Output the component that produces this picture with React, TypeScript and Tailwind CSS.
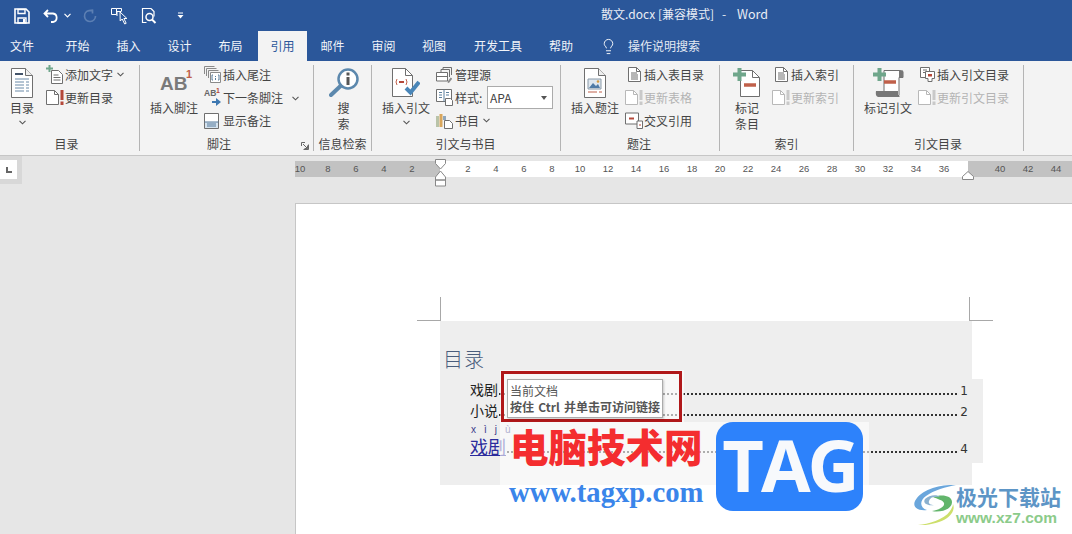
import React from "react";
import { Lightbulb } from "lucide-react";

const G = "#6f6f6f";
const L = "#b8b8b8";

function PageSvg({ w = 22, h = 30, disabled = false, children }: { w?: number; h?: number; disabled?: boolean; children?: React.ReactNode }) {
  return (
    <svg width={w} height={h} viewBox="0 0 22 30" fill="none">
      <path d="M.5.5h14l7 7v22H.5z" fill="#fff" stroke={disabled ? L : G} />
      <path d="M14.5.5v7h7" stroke={disabled ? L : G} fill="#eee" />
      {children}
    </svg>
  );
}

const Toc = () => (
  <PageSvg>
    <path d="M4 6h8" stroke="#44546a" strokeWidth="2" />
    <path d="M4 11h14M4 14h9M15 14h3M4 17h9M15 17h3M4 20h9M15 20h3M4 23h9M15 23h3" stroke="#6b8aa8" />
  </PageSvg>
);

const SmallPage = ({ dis = false, lines = false }: { dis?: boolean; lines?: boolean }) => (
  <svg width="13" height="15" viewBox="0 0 13 15" fill="none">
    <path d="M.5.5h8l4 4v10H.5z" fill="#fff" stroke={dis ? L : G} />
    <path d="M8.5.5v4h4" stroke={dis ? L : G} />
    {lines && <path d="M3 6h6M3 8h7M3 10h7M3 12h7" stroke={G} />}
  </svg>
);

const Bang = ({ dis = false }: { dis?: boolean }) => (
  <span className="flex items-center gap-[1px]">
    <SmallPage dis={dis} />
    <svg width="4" height="15" viewBox="0 0 4 15">
      <path d="M.5 0h3v10h-3zM.5 11.5h3V15h-3z" fill={dis ? "#c9c9c9" : "#b5493a"} />
    </svg>
  </span>
);

const AddText = () => (
  <svg width="18" height="19" viewBox="0 0 18 19" fill="none">
    <path d="M5.5 5.500h7l4 4v9h-11z" fill="#fff" stroke={G} />
    <path d="M7.500 10h5M7.500 12.500h7M7.500 15h7" stroke={G} />
    <path d="M2.500 0h2v2.500H7v2H4.500V7h-2V4.500H0v-2h2.500z" fill="#6fa68b" />
  </svg>
);

const Endnote = () => (
  <svg width="17" height="17" viewBox="0 0 17 17" fill="none">
    <path d="M.5 8V.5h10M2.500 10V2.500h10M4.500 12V4.500h10" stroke="#8a8a8a" />
    <path d="M6.500 6.500h10v10h-10z" fill="#fff" stroke="#8a8a8a" />
    <path d="M9 9H8v5h1M14 9h1v5h-1M11.500 10v1M11.500 12v2" stroke="#5b7f9d" />
  </svg>
);

const NextNote = () => (
  <span className="relative block w-[17px] h-[17px] font-['Liberation_Sans',sans-serif]">
    <span className="absolute left-0 top-0 text-[8.500px] leading-[9px] font-bold text-[#666]">AB</span>
    <span className="absolute left-[12px] top-[-2px] text-[7px] leading-[8px] font-bold text-[#b5493a]">1</span>
    <svg className="absolute left-[8px] top-[9px]" width="9" height="8" viewBox="0 0 9 8">
      <path d="M0 3h4V0l5 4-5 4V5H0z" fill="#3d78b1" />
    </svg>
  </span>
);

const ShowNotes = () => (
  <svg width="15" height="16" viewBox="0 0 15 16" fill="none">
    <path d="M.5.5h14v15H.5z" fill="#fff" stroke={G} />
    <path d="M1 9h13v6H1z" fill="#d5e3ef" />
    <path d="M.5 9h14M3 11h9M3 13h9" stroke="#54789a" />
  </svg>
);

const Search = () => (
  <svg width="30" height="30" viewBox="0 0 30 30" fill="none">
    <circle cx="19" cy="11" r="9.500" fill="#fff" stroke="#5c88ad" strokeWidth="2.500" />
    <path d="M11.500 18L2 27" stroke="#5c88ad" strokeWidth="4" strokeLinecap="round" />
    <path d="M17.500 9h3v8h-3zM17.500 4.500h3v3h-3z" fill="#555" />
  </svg>
);

const Citation = () => (
  <svg width="28" height="30" viewBox="0 0 28 30" fill="none">
    <path d="M.5.500h13l7 7v21H.5z" fill="#fff" stroke={G} />
    <path d="M13.500.5v7h7" stroke={G} />
    <path d="M5 11q-2 3 0 6M14 11q2 3 0 6" stroke="#c0604a" />
    <path d="M7 14h5" stroke="#b5493a" strokeWidth="2" />
    <path d="M14 20l4.500 4.500L27 14" stroke="#4a86b8" strokeWidth="4" />
  </svg>
);

const Manage = () => (
  <svg width="16" height="16" viewBox="0 0 16 16" fill="none">
    <path d="M7 3V.5h8.500V8M5 5V2.500h8.500V10" stroke={G} />
    <path d="M.5 5.500h11V14H.5z" fill="#fff" stroke={G} />
    <path d="M.5 9.500h11" stroke={G} />
    <path d="M12 15.500L15.500 11" stroke="#8a8a8a" strokeWidth="2" />
  </svg>
);

const StyleI = () => (
  <svg width="17" height="17" viewBox="0 0 17 17" fill="none">
    <path d="M.5.5h15v12H.5z" fill="#fff" stroke={G} />
    <path d="M8 .5v12M3 3.500h3M3 6h3M3 8.500h3M10 3.500h3M10 6h3" stroke="#5b7f9d" />
    <path d="M9.500 9.500h5l2 2v5h-7z" fill="#fff" stroke={G} />
  </svg>
);

const Biblio = () => (
  <svg width="17" height="17" viewBox="0 0 17 17" fill="none">
    <path d="M0 4h3v11H0z" fill="#b9c3a8" />
    <path d="M3.500 2h3v13h-3z" fill="#d9a75d" />
    <path d="M7 4h3v4H7z" fill="#8fa7bd" />
    <path d="M8.500 8.500h5l3 3v5h-8z" fill="#fff" stroke={G} />
  </svg>
);

const Caption = () => (
  <PageSvg>
    <path d="M4 11h13v10H4z" fill="#dfe7ee" stroke="#8a9aa8" />
    <path d="M5 20l4-5 3 3 2-2 2 4z" fill="#4f7ba6" />
    <circle cx="14" cy="13.500" r="1.300" fill="#d59b3f" />
    <path d="M4 24h9M15 24h3" stroke="#c0604a" />
  </PageSvg>
);

const CrossRef = () => (
  <svg width="18" height="17" viewBox="0 0 18 17" fill="none">
    <path d="M.5 1h13v11H.5z" fill="#fff" stroke={G} />
    <path d="M4 6.500h5" stroke="#b5493a" strokeWidth="2" />
    <path d="M12 9h5.500v7.500H12z" fill="#fff" stroke={G} />
    <path d="M14 13h2" stroke="#b5493a" />
  </svg>
);

const MarkEntry = () => (
  <svg width="28" height="29" viewBox="0 0 28 29" fill="none">
    <path d="M7.500 2.500h12l7 7v19h-19z" fill="#fff" stroke={G} />
    <path d="M19.500 2.500v7h7" stroke={G} />
    <path d="M11 17h12" stroke="#c0604a" strokeWidth="3.500" />
    <path d="M4.500 0h4v4.500H13v4H8.500V13h-4V8.500H0v-4h4.500z" fill="#6fa68b" />
  </svg>
);

const MarkCite = () => (
  <svg width="31" height="29" viewBox="0 0 31 29" fill="none">
    <path d="M11 2.500h16l3 1v6h-4v18H11z" fill="#fff" stroke={G} />
    <path d="M26 2.500h4v7h-4z" fill="#777" />
    <path d="M3 23h22v4l2 2H5q-3-1-2-6z" fill="#777" />
    <path d="M11 14h12" stroke="#c0604a" strokeWidth="3.500" />
    <path d="M4.500 0h4v4.500H13v4H8.500V13h-4V8.500H0v-4h4.500z" fill="#6fa68b" />
  </svg>
);

const Toa = () => (
  <svg width="15" height="15" viewBox="0 0 15 15" fill="none">
    <path d="M.5.5h9v10H.5z" fill="#fff" stroke={G} />
    <path d="M3 3h4M3 5.500h4" stroke={G} />
    <path d="M5.500 4.500h9v7h-2.500v3H8v-3H5.500z" fill="#fff" stroke={G} />
    <path d="M8 7h4v2.500H8z" fill="#b5493a" />
  </svg>
);

function Big({ w, ml = 0, icon, lines, chev = false, top = 5 }: { w: number; ml?: number; icon: React.ReactNode; lines: string[]; chev?: boolean; top?: number }) {
  return (
    <div className="flex flex-col items-center shrink-0" style={{ width: w, marginLeft: ml }}>
      <div className="h-[37px] flex items-start justify-center" style={{ paddingTop: top }}>{icon}</div>
      {lines.map((t) => (
        <div key={t} className="text-[12px] leading-[16px] text-[#444] whitespace-nowrap">{t}</div>
      ))}
      {chev && <Chev className="mt-[4px]" />}
    </div>
  );
}

const Chev = ({ className = "" }: { className?: string }) => (
  <svg className={className} width="7" height="5" viewBox="0 0 7 5" fill="none">
    <path d="M.5.800l3 3 3-3" stroke="#555" strokeWidth="1.100" />
  </svg>
);

function Small({ icon, text, dis = false, chev = false }: { icon?: React.ReactNode; text: string; dis?: boolean; chev?: boolean }) {
  return (
    <div className="h-[23px] flex items-center whitespace-nowrap">
      <span className="flex items-center shrink-0 w-[19px]">{icon}</span>
      <span className={`text-[12px] leading-[16px] ${dis ? "text-[#b4b4b4]" : "text-[#444]"}`}>{text}</span>
      {chev && <Chev className="shrink-0 ml-[4px]" />}
    </div>
  );
}

function Group({ w, label, labelClass = "", children }: { w: number; label: string; labelClass?: string; children: React.ReactNode }) {
  return (
    <div className="relative flex flex-col shrink-0" style={{ width: w }}>
      <div className="h-[73px] flex items-start">{children}</div>
      <div className={`text-[12px] leading-[16px] text-[#444] text-center whitespace-nowrap ${labelClass}`}>{label}</div>
      <div className="absolute right-0 top-[2px] h-[86px] w-[1px] bg-[#b4b4b4]" />
    </div>
  );
}

const tabs = [
  { t: "开始", w: 51 }, { t: "插入", w: 51 }, { t: "设计", w: 51 }, { t: "布局", w: 51 },
];
const tabs2 = [
  { t: "邮件", w: 51 }, { t: "审阅", w: 51 }, { t: "视图", w: 50 }, { t: "开发工具", w: 78 }, { t: "帮助", w: 48 },
];

const rulerNums = ["10", "8", "6", "4", "2", "", "2", "4", "6", "8", "10", "12", "14", "16", "18", "20", "22", "24", "26", "28", "30", "32", "34", "36", "", "40", "42", "44"];

function TocRow({ label, num, className = "" }: { label: string; num: string; className?: string }) {
  return (
    <div className={`flex items-end ${className}`}>
      <span className="text-[14px] leading-[20px] text-[#222]">{label}</span>
      <span className="flex-1 border-b-2 border-dotted border-[#333] mb-[4px] mx-[1px]" />
      <span className="w-[10px] text-right text-[12px] leading-[15px] text-[#333] font-['DejaVu_Sans',sans-serif]">{num}</span>
    </div>
  );
}

export default function App() {
  return (
    <div className="relative w-[1072px] h-[534px] overflow-hidden flex flex-col bg-[#e6e6e6] font-['Noto_Sans_CJK_SC','Liberation_Sans',sans-serif]">
      {/* title bar */}
      <div className="h-[31px] bg-[#2b579a] flex items-center shrink-0 relative">
        <div className="flex items-center pl-[14px] text-white">
          <svg width="16" height="16" viewBox="0 0 16 16" fill="none">
            <path d="M1 1h11l3 3v11H1z" stroke="#fff" strokeWidth="1.600" />
            <path d="M4 1.500h7v4H4zM4 10h8v5H4z" stroke="#fff" strokeWidth="1.400" />
            <path d="M9 11h2v4H9z" fill="#fff" />
          </svg>
          <svg className="ml-[13px]" width="16" height="14" viewBox="0 0 16 14" fill="none">
            <path d="M5 1L1.500 4.500 5 8M2 4.500h8a4.300 4.300 0 010 8.500H8" stroke="#fff" strokeWidth="1.800" />
          </svg>
          <Chevw className="ml-[5px]" />
          <svg className="ml-[12px]" width="14" height="14" viewBox="0 0 14 14" fill="none">
            <path d="M12.500 7A5.500 5.500 0 116 1.600M6 1.600L10 1M9.500 .5v4" stroke="#5c7fb3" strokeWidth="1.700" />
          </svg>
          <svg className="ml-[14px]" width="18" height="18" viewBox="0 0 18 18" fill="none">
            <path d="M.5 1.500h5v6h-5zM5.500 1.500h5v3M6 9V4.500h4" stroke="#fff" />
            <path d="M9 5l.2 9 2-2 2.500 5 1.500-.7-2.300-4.800h3z" stroke="#fff" fill="#2b579a" />
          </svg>
          <svg className="ml-[12px]" width="16" height="18" viewBox="0 0 16 18" fill="none">
            <path d="M10 1.500H1.500v14h4M10 1.500l3 3v5" stroke="#fff" strokeWidth="1.200" />
            <circle cx="8.500" cy="10" r="3.500" stroke="#fff" strokeWidth="1.500" />
            <path d="M11 12.500l3.500 3.500" stroke="#fff" strokeWidth="2" />
          </svg>
          <svg className="ml-[20px]" width="7" height="7" viewBox="0 0 7 7">
            <path d="M1 .5h5v1H1zM.5 3h6L3.500 6.500z" fill="#fff" />
          </svg>
        </div>
        <div className="absolute left-[601px] top-[6px] flex text-[12px] leading-[16px] text-[#e8edf5] whitespace-nowrap">
          <span className="w-[121px]">散文.docx [兼容模式]</span>
          <span className="w-[15px]">-</span>
          <span className="text-[12.500px]">Word</span>
        </div>
      </div>

      {/* tabs */}
      <div className="h-[30px] bg-[#2b579a] flex items-end shrink-0 text-[12px] text-[#f1f4f9]">
        <div className="w-[44px] h-[30px] flex items-center justify-center">文件</div>
        <div className="w-[8px]" />
        {tabs.map((x) => (
          <div key={x.t} className="h-[30px] flex items-center justify-center" style={{ width: x.w }}>{x.t}</div>
        ))}
        <div className="w-[2px]" />
        <div className="w-[49px] h-[30px] bg-[#f3f3f3] text-[#2b579a] flex items-center justify-center">引用</div>
        {tabs2.map((x) => (
          <div key={x.t} className="h-[30px] flex items-center justify-center" style={{ width: x.w }}>{x.t}</div>
        ))}
        <div className="h-[30px] flex items-center ml-[15px] gap-[11px] text-[#e4eaf3]">
          <Lightbulb size={17} strokeWidth={1.300} color="#fff" />
          <span>操作说明搜索</span>
        </div>
      </div>

      {/* ribbon */}
      <div className="h-[95px] bg-[#f3f3f3] border-b border-[#c6c6c6] flex pt-[2px] shrink-0">
        <Group w={140} label="目录" labelClass="pr-[7px]">
          <Big w={44} icon={<Toc />} lines={["目录"]} chev />
          <div className="ml-[2px]">
            <Small icon={<AddText />} text="添加文字" chev />
            <Small icon={<Bang />} text="更新目录" />
          </div>
        </Group>
        <Group w={174} label="脚注" labelClass="pr-[16px]">
          <Big w={52} ml={8} top={9} icon={<span className="relative block w-[28px] h-[24px] font-['Liberation_Sans',sans-serif] text-[19px] leading-[24px] font-bold text-[#7a7a7a]">AB<span className="absolute right-[-4px] top-[-4px] text-[11px] leading-[12px] text-[#c0604a]">1</span></span>} lines={["插入脚注"]} />
          <div className="ml-[4px]">
            <Small icon={<Endnote />} text="插入尾注" />
            <Small icon={<NextNote />} text="下一条脚注" />
            <Small icon={<ShowNotes />} text="显示备注" />
          </div>
          <Chev className="mt-[33px] ml-[9px]" />
          <svg className="absolute left-[161px] top-[79px]" width="8" height="8" viewBox="0 0 8 8" fill="none">
            <path d="M.5 4V.5H4M7.500 2.500v5H2.500M2 2l4.500 4.500M6.500 3.500v3h-3" stroke="#666" />
          </svg>
        </Group>
        <Group w={58} label="信息检索" labelClass="pr-[1px]">
          <Big w={57} ml={1} icon={<Search />} lines={["搜", "索"]} />
        </Group>
        <Group w={189} label="引文与书目" labelClass="pr-[2px]">
          <Big w={48} ml={10} icon={<Citation />} lines={["插入引文"]} chev />
          <div className="ml-[6px]">
            <Small icon={<Manage />} text="管理源" />
            <div className="h-[23px] flex items-center whitespace-nowrap">
              <span className="w-[19px] flex items-center"><StyleI /></span>
              <span className="text-[12px] leading-[16px] text-[#444] w-[32px]">样式:</span>
              <div className="w-[66px] h-[23px] bg-white border border-[#ababab] flex items-center justify-between pl-[2px] pr-[5px] text-[12px] text-[#444]">
                <span>APA</span>
                <svg width="6" height="4" viewBox="0 0 6 4"><path d="M0 0h6L3 4z" fill="#555" /></svg>
              </div>
            </div>
            <Small icon={<Biblio />} text="书目" chev />
          </div>
        </Group>
        <Group w={159} label="题注" labelClass="pr-[3px]">
          <Big w={48} ml={10} icon={<Caption />} lines={["插入题注"]} />
          <div className="ml-[6px]">
            <Small icon={<span className="pl-[3px]"><SmallPage lines /></span>} text="插入表目录" />
            <Small icon={<Bang dis />} text="更新表格" dis />
            <Small icon={<CrossRef />} text="交叉引用" />
          </div>
        </Group>
        <Group w={134} label="索引" labelClass="pr-[1px]">
          <Big w={26} ml={14} icon={<span className="block -ml-[1px]"><MarkEntry /></span>} lines={["标记", "条目"]} />
          <div className="ml-[12px]">
            <Small icon={<span className="pl-[3px]"><SmallPage lines /></span>} text="插入索引" />
            <Small icon={<Bang dis />} text="更新索引" dis />
          </div>
        </Group>
        <Group w={170} label="引文目录" labelClass="pr-[2px]">
          <Big w={48} ml={10} icon={<MarkCite />} lines={["标记引文"]} />
          <div className="ml-[6px]">
            <Small icon={<span className="pl-[2px]"><Toa /></span>} text="插入引文目录" />
            <Small icon={<Bang dis />} text="更新引文目录" dis />
          </div>
        </Group>
      </div>

      {/* ruler row */}
      <div className="h-[28px] flex items-start shrink-0 relative">
        <div className="w-[22px] h-[28px] bg-[#d8d8d8] shrink-0 pt-[4px]">
          <div className="w-[17px] h-[19px] bg-white flex items-center justify-center">
            <svg width="6" height="6" viewBox="0 0 6 6"><path d="M0 0h2v4h4v2H0z" fill="#666" /></svg>
          </div>
        </div>
        <div className="ml-[273px] flex-1 mt-[5px] h-[16px] flex relative overflow-hidden">
          <div className="w-[145px] bg-[#c2c2c2]" />
          <div className="w-[528px] bg-white" />
          <div className="flex-1 bg-[#c2c2c2]" />
          <div className="absolute left-[-9px] top-0 h-[16px] flex">
            {rulerNums.map((n, i) => (
              <div key={i} className="w-[28px] shrink-0 text-center text-[9.500px] leading-[16px] text-[#555] font-['Liberation_Sans',sans-serif]">{n}</div>
            ))}
          </div>
        </div>
        <svg className="absolute left-[435px] top-[3px]" width="11" height="28" viewBox="0 0 11 28" fill="none">
          <path d="M.5.500h10v4L5.500 10 .5 4.500z" fill="#fff" stroke="#888" />
          <path d="M5.500 12l5 6v3H.5v-3zM.5 21h10v6H.5z" fill="#fff" stroke="#888" />
        </svg>
        <svg className="absolute left-[962px] top-[15px]" width="12" height="9" viewBox="0 0 12 9" fill="none">
          <path d="M6 .5l5.500 5v3H.5v-3z" fill="#fff" stroke="#888" />
        </svg>
      </div>

      {/* document */}
      <div className="flex-1 pl-[295px] pt-[19px]">
        <div className="h-[400px] bg-white border-l border-t border-[#c6c6c6] pt-[93px]">
          <div className="flex ml-[121px] h-[24px]">
            <div className="w-[24px] border-r border-b border-[#a8a8a8]" />
            <div className="w-[528px]" />
            <div className="w-[24px] border-l border-b border-[#a8a8a8]" />
          </div>
          <div className="ml-[144px] w-[532px] h-[164px] bg-[#eeeeee] relative pt-[26px]">
            <div className="ml-[3px] text-[20px] leading-[24px] font-light text-[#4a5d7c] tracking-[1px]">目录</div>
            <div className="absolute left-[30px] top-[58px] w-[513px] h-[84px] bg-[#eeeeee] pr-[15px]">
              <TocRow label="戏剧" num="1" />
              <TocRow label="小说" num="2" className="mt-[1px]" />
              <div className="flex items-center gap-[8px] h-[9px] mt-[5px] pl-[1px] text-[10px] leading-[10px] text-[#3a3a8a] font-['Liberation_Sans',sans-serif]">
                <span>x</span><span>ì</span><span>j</span><span>ù</span>
              </div>
              <div className="flex items-end">
                <span className="text-[18px] leading-[24px] text-[#2b2b9c] underline">戏剧</span>
                <span className="flex-1 border-b-2 border-dotted border-[#333] mb-[5px] mx-[1px]" />
                <span className="w-[10px] text-right text-[12px] leading-[18px] text-[#333] font-['DejaVu_Sans',sans-serif]">4</span>
              </div>
            </div>
          </div>
        </div>
      </div>

      {/* watermark overlays */}
      <div className="absolute left-[500px] top-[370px] w-[184px] h-[52px] bg-white/60" />
      <div className="absolute left-[500px] top-[422px] w-[369px] h-[88px] bg-white/60" />
      <div className="absolute left-[501px] top-[371px] w-[181px] h-[51px] border-[3px] border-[#b0181a]" />
      <div className="absolute left-[507px] top-[379px] w-[156px] h-[39px] bg-white border border-[#ababab] shadow-[1px_1px_2px_rgba(0,0,0,0.2)] pl-[2px] text-[12px] leading-[16px] text-[#555] pt-[3px] whitespace-nowrap">
        <div>当前文档</div>
        <div className="font-bold [word-spacing:1.500px]">按住 Ctrl 并单击可访问链接</div>
      </div>
      <div className="absolute left-[510px] top-[422px] text-[38.500px] leading-[46px] font-black text-[#f42d2f] whitespace-nowrap">电脑技术网</div>
      <div className="absolute left-[509px] top-[476px] text-[28.700px] leading-[32px] font-bold text-[#3a85ea] whitespace-nowrap font-['Liberation_Serif',serif]">www.tagxp.com</div>
      <div className="absolute left-[716px] top-[422px] w-[147px] h-[89px] rounded-[17px] bg-[#2d82fb] flex items-center justify-center text-[72px] leading-[85px] pb-[4px] font-bold text-[#f7f9fc] font-['Open_Sans',sans-serif] tracking-[-3px]">TAG</div>

      {/* corner logo */}
      <div className="absolute left-[913px] top-[484px] w-[155px] h-[46px] flex">
        <svg width="46" height="41" viewBox="0 0 46 41" fill="none">
          <path d="M43 1C28 0 8 5 2 17c-3 7 4 10 12 9C7 24 6 17 13 12 21 6 33 3 43 1z" fill="#6aa6dc" />
          <path d="M20 13c8-3 19-2 19 5 0 8-13 11-20 9 7-1 13-4 12-8-1-3-7-4-11-6z" fill="#62b56b" />
          <path d="M5 41c10-1 26-5 32-14 2-3 3-5 3-7 3 8-5 15-14 18-7 2-15 4-21 3z" fill="#cddf6b" />
          <path d="M12 15c4-4 12-5 15-2-6-1-10 0-11 4-1 3 2 4 5 4-5 1-12-1-9-6z" fill="#8ab0cf" />
        </svg>
        <div className="ml-[-3px] flex flex-col pt-[1px]">
          <div className="text-[21px] leading-[22px] font-bold text-[#5d95c6] whitespace-nowrap">极光下载站</div>
          <div className="text-[15.500px] leading-[18px] mt-[2px] font-bold text-[#8ccb8a] whitespace-nowrap font-['Liberation_Sans',sans-serif]">www.xz7.com</div>
        </div>
      </div>
    </div>
  );
}

function Chevw({ className = "" }: { className?: string }) {
  return (
    <svg className={className} width="7" height="5" viewBox="0 0 7 5" fill="none">
      <path d="M.5.800l3 3 3-3" stroke="#fff" strokeWidth="1.200" />
    </svg>
  );
}
